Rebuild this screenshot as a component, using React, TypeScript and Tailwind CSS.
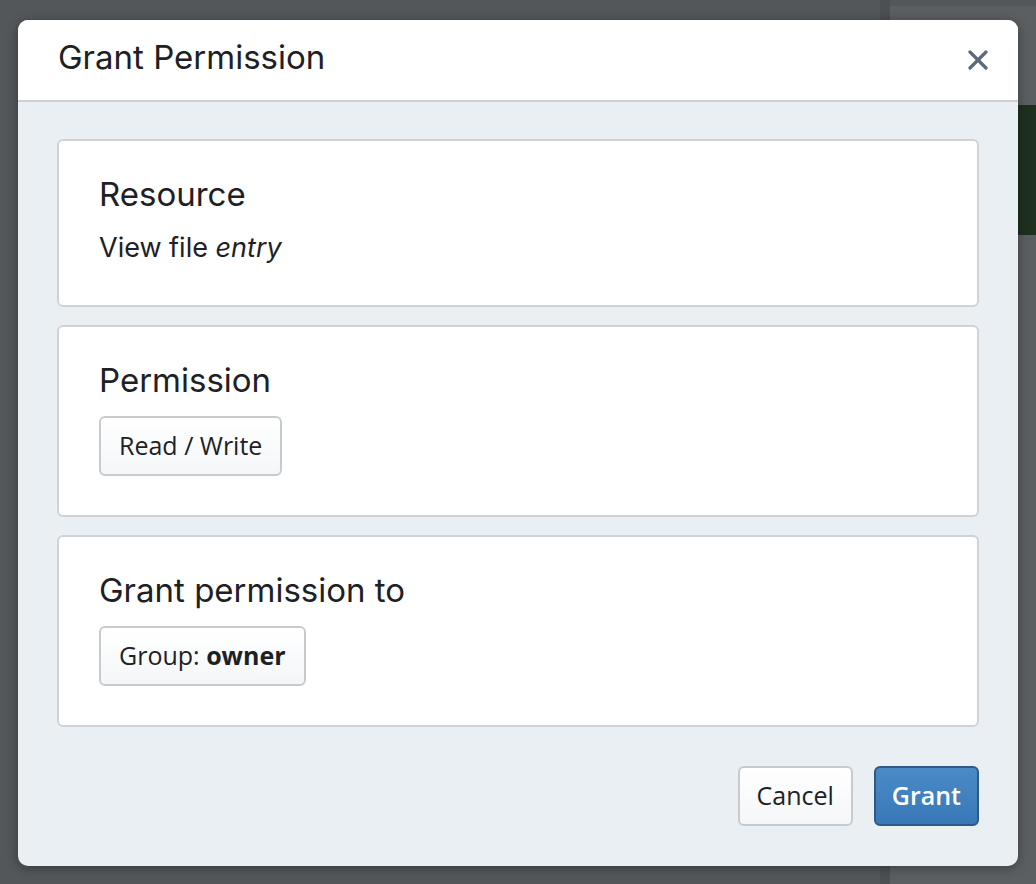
const sans = { fontFamily: "Inter, 'Noto Sans', sans-serif" }
const btnFont = { fontFamily: "'Open Sans', 'Noto Sans', sans-serif" }

function Section({ title, children }: { title: string; children: React.ReactNode }) {
  return (
    <div className="rounded-md border-2 border-[#cfd3d7] bg-white px-[40px] pt-[33px] pb-[39px]">
      <h3 className="text-[33px] leading-[40px] text-[#1d2125]">{title}</h3>
      <div className="mt-[16px]">{children}</div>
    </div>
  )
}

function Chip({ children }: { children: React.ReactNode }) {
  return (
    <span
      className="inline-flex h-[60px] items-center rounded-md border-2 border-[#c8cbce] bg-gradient-to-b from-white to-[#f4f6f8] px-[18px] text-[25px] text-[#1d2125]"
      style={btnFont}
    >
      {children}
    </span>
  )
}

export default function App() {
  return (
    <div className="relative h-[884px] w-[1036px] overflow-hidden bg-[#54575a]" style={sans}>
      {/* page behind the overlay */}
      <div className="flex h-full">
        <div className="flex-1" />
        <div className="w-[10px] bg-[#4d5052]" />
        <div className="mt-[6px] w-[146px] bg-[#5c5f62]">
          <div className="ml-[128px] mt-[99px] h-[130px] bg-[#1e301f]" />
        </div>
      </div>

      <div className="absolute left-[18px] top-[20px] flex h-[846px] w-[1000px] flex-col overflow-hidden rounded-[10px] bg-[#eaeff3] shadow-[0_2px_12px_rgba(0,0,0,0.35)]">
        <div className="flex h-[82px] shrink-0 items-center justify-between border-b-2 border-[#cdd1d5] bg-white pb-[4px] pl-[40px] pr-[30px]">
          <h2 className="text-[33px] text-[#1d2125]">Grant Permission</h2>
          <svg width="20" height="20" viewBox="0 0 20 20" className="mt-[4px]">
            <path d="M2 2 L18 18 M18 2 L2 18" stroke="#5a6a7a" strokeWidth="3.2" strokeLinecap="round" />
          </svg>
        </div>

        <div className="flex flex-1 flex-col gap-[18px] px-[39px] pt-[37px]">
          <Section title="Resource">
            <p className="text-[27px] leading-[36px] text-[#1d2125]">
              View file <em>entry</em>
            </p>
          </Section>
          <Section title="Permission">
            <Chip>Read / Write</Chip>
          </Section>
          <Section title="Grant permission to">
            <Chip>
              Group:&nbsp;<b>owner</b>
            </Chip>
          </Section>

          <div className="mt-[21px] flex justify-end gap-[21px]">
            <button
              className="h-[60px] rounded-md border-2 border-[#c8cbce] bg-gradient-to-b from-white to-[#f4f6f8] px-[17px] text-[25px] text-[#1d2125]"
              style={btnFont}
            >
              Cancel
            </button>
            <button
              className="h-[60px] rounded-md border-2 border-[#2c5a85] bg-gradient-to-b from-[#4a8bc6] to-[#3878b8] px-[16px] text-[25px] font-semibold text-white"
              style={btnFont}
            >
              Grant
            </button>
          </div>
        </div>
      </div>
    </div>
  )
}
